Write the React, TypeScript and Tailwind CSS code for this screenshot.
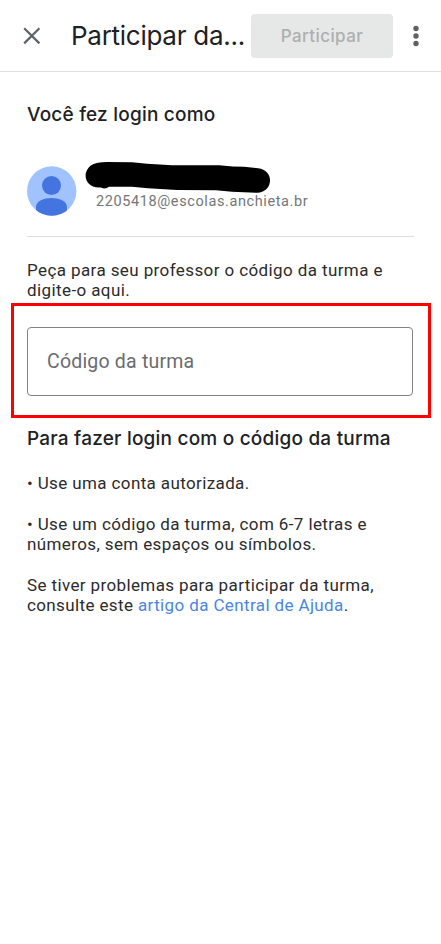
export default function App() {
  return (
    <div className="h-[944px] w-[441px] overflow-hidden bg-white font-['Roboto',sans-serif] text-[#2b2b2d]">
      <header className="flex h-[72px] items-center border-b border-[#dedfe0]">
        <svg className="ml-[23px] shrink-0" width="18" height="18" viewBox="0 0 18 18" stroke="#5f6368" strokeWidth="2.2" fill="none">
          <path d="M1.2 1.2 16.4 16.4M16.4 1.2 1.2 16.4" />
        </svg>
        <h1 className="ml-[30px] w-[180px] shrink-0 whitespace-nowrap font-['Inter',sans-serif] text-[26px] leading-8 tracking-[-0.27px] text-[#202124]">
          Participar da...
        </h1>
        <button className="h-11 w-[142px] shrink-0 rounded-[4px] bg-[#e6e8e7] pt-[2px] font-['Inter',sans-serif] text-[17px] font-medium tracking-[0.4px] text-[#adafae]">
          Participar
        </button>
        <svg className="ml-[19px] shrink-0" width="8" height="22" viewBox="0 0 8 22" fill="#5f6063">
          <circle cx="4" cy="3.5" r="2.7" />
          <circle cx="4" cy="11" r="2.7" />
          <circle cx="4" cy="18.5" r="2.7" />
        </svg>
      </header>

      <main>
        <h2 className="ml-[27px] mt-[31px] w-fit font-['Inter',sans-serif] text-[19px] font-medium leading-6 tracking-[0.21px] text-[#202124]">
          Você fez login como
        </h2>

        <section className="mx-[27px] mt-[33px] flex h-[77px] border-b border-[#dedfe0]">
          <svg className="mt-[6px] shrink-0" width="50" height="50" viewBox="0 0 50 50">
            <defs>
              <clipPath id="avatar">
                <circle cx="24.7" cy="25" r="24.7" />
              </clipPath>
            </defs>
            <g clipPath="url(#avatar)">
              <rect width="50" height="50" fill="#a0c3ff" />
              <circle cx="24.5" cy="19.5" r="9.5" fill="#4374e0" />
              <path d="M9 50V41C9 35 17 32 24.5 32S40 35 40 41V50Z" fill="#4374e0" />
            </g>
          </svg>
          <div className="ml-[8px]">
            <svg className="block" width="186" height="33" viewBox="0 0 186 33">
              <path
                d="M13 2.7Q17 2 22 2L47 2.2 62 3.8 87 5.2 134 5.2 148 6.6 159 6.7 173 8.3C189 10 189 31 173 32.8L147 31.8 131 30.2 92 30.1 63 28.2 47 26.7H24Q20 29.8 16 27.4C-4 29-4 5 13 2.7Z"
                fill="#000"
              />
            </svg>
            <p className="ml-[11px] mt-px w-fit text-[14.5px] leading-[16px] tracking-[0.6px] text-[#757678]">2205418@escolas.anchieta.br</p>
          </div>
        </section>

        <p className="ml-[27px] mt-[23px] whitespace-nowrap text-[17px] leading-5 tracking-[0.4px]">
          Peça para seu professor o código da turma e<br />
          digite-o aqui.
        </p>

        <div className="ml-[11px] mt-[3px] h-[115px] w-[420px] border-[3px] border-[#ff0000] px-[13px] py-[21px]">
          <div className="flex h-[69px] w-[386px] items-center rounded-[4px] border border-[#808487] pl-[19px] text-[19.5px] tracking-[0.2px] text-[#6a6c6f]">
            <span>Código da turma</span>
          </div>
        </div>

        <h2 className="ml-[27px] mt-[9px] w-fit whitespace-nowrap font-['Inter',sans-serif] text-[19px] font-medium leading-6 tracking-[0.21px] text-[#202124]">
          Para fazer login com o código da turma
        </h2>

        <div className="ml-[27px] mt-[22px] space-y-[20.5px] whitespace-nowrap text-[17px] leading-[20.3px] tracking-[0.38px]">
          <p>• Use uma conta autorizada.</p>
          <p>
            • Use um código da turma, com 6-7 letras e<br />
            números, sem espaços ou símbolos.
          </p>
          <p>
            Se tiver problemas para participar da turma,<br />
            consulte este <a className="text-[#4a86df]">artigo da Central de Ajuda</a>.
          </p>
        </div>
      </main>
    </div>
  );
}
